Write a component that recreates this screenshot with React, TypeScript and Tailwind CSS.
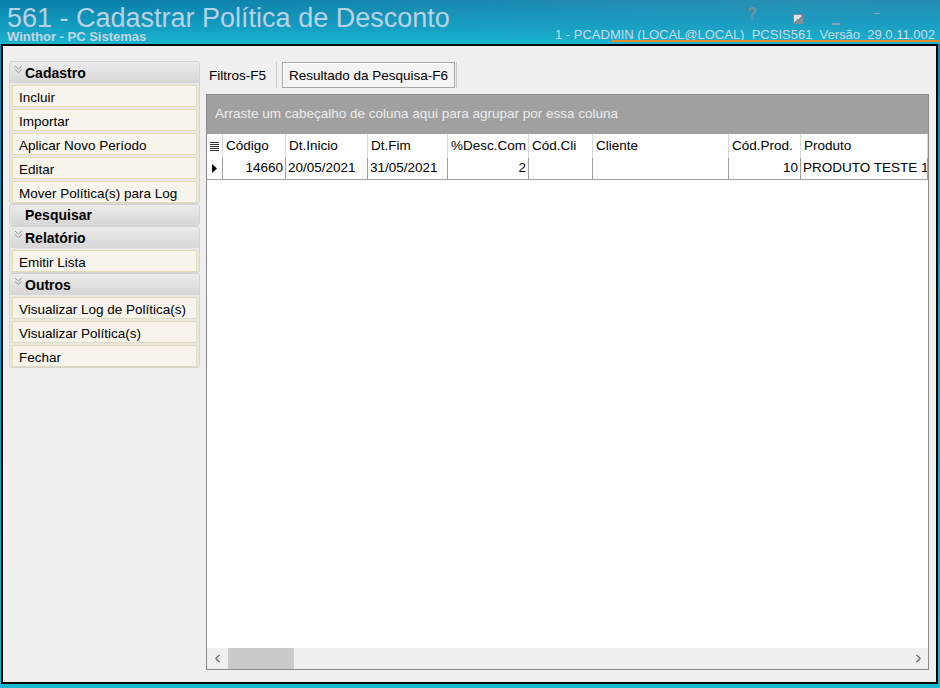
import { ChevronLeft, ChevronRight } from 'lucide-react';

const cadastro = ['Incluir', 'Importar', 'Aplicar Novo Período', 'Editar', 'Mover Política(s) para Log'];
const relatorio = ['Emitir Lista'];
const outros = ['Visualizar Log de Política(s)', 'Visualizar Política(s)', 'Fechar'];

const columns = [
  { label: 'Código', w: 'w-[63px]', value: '14660', right: true },
  { label: 'Dt.Inicio', w: 'w-[82px]', value: '20/05/2021' },
  { label: 'Dt.Fim', w: 'w-[80px]', value: '31/05/2021' },
  { label: '%Desc.Com', w: 'w-[81px]', value: '2', right: true },
  { label: 'Cód.Cli', w: 'w-[64px]', value: '' },
  { label: 'Cliente', w: 'w-[136px]', value: '' },
  { label: 'Cód.Prod.', w: 'w-[72px]', value: '10', right: true },
  { label: 'Produto', w: 'flex-1', value: 'PRODUTO TESTE 10' },
];

function Chevrons() {
  return (
    <svg width="9" height="9" viewBox="0 0 9 9" className="shrink-0">
      <path d="M1 1l3.5 3 3.5-3M1 4.5l3.5 3 3.5-3" fill="none" stroke="#9a9a9a" strokeWidth="1" />
    </svg>
  );
}

function GroupHeader({ title }: { title: string }) {
  return (
    <div className="h-[21px] flex items-center gap-[2px] pl-[4px] rounded-t-[3px] bg-gradient-to-b from-[#ececec] to-[#d6d6d6]">
      <div className="w-[9px] self-start pt-[3px]">
        <Chevrons />
      </div>
      <span className="font-bold text-[14px] text-black leading-none">{title}</span>
    </div>
  );
}

function Group({ title, items }: { title: string; items: string[] }) {
  return (
    <div className="rounded-[3px] border border-[#d4d4d4] bg-[#e8e8e8]">
      <GroupHeader title={title} />
      <div className="flex flex-col gap-[2px] px-[2px] pt-[2px]">
        {items.map((it) => (
          <div
            key={it}
            className="h-[22px] flex items-center pl-[6px] pt-[4px] border border-[#e2dbb6] bg-[#f7f5ec] text-[13.5px] text-black"
          >
            {it}
          </div>
        ))}
      </div>
    </div>
  );
}

export default function App() {
  return (
    <div
      className="w-[940px] h-[688px] flex flex-col overflow-hidden bg-gradient-to-b from-[#0e88b2] to-[#19b6d0]"
      style={{ fontFamily: '"Liberation Sans", Arial, sans-serif' }}
    >
      {/* title bar */}
      <div className="h-[44px] relative shrink-0 bg-gradient-to-b from-[#0a80aa] via-[#1197bd] to-[#1cb4d0]">
        <div className="absolute inset-0 bg-[radial-gradient(ellipse_at_85%_0%,rgba(255,255,255,0.12),transparent_60%)]" />
        <div className="relative pl-[7px] pt-[5px] flex flex-col">
          <span className="text-[27px] leading-[26px] text-[#b8d2e4]">561 - Cadastrar Política de Desconto</span>
          <span className="text-[13px] leading-[12px] font-bold text-[#c4d6e2]">Winthor - PC Sistemas</span>
        </div>
        <span className="absolute left-[747px] top-[2px] text-[16px] font-bold text-[#7d8f99]">?</span>
        <span className="absolute left-[793px] top-[14px] w-[10px] h-[10px] bg-[linear-gradient(135deg,#e2e2e2_50%,#7d8f99_50%)] border border-[#7d8f99]" />
        <span className="absolute left-[832px] top-[23px] w-[8px] h-[2px] bg-[#8ea0aa]" />
        <span className="absolute left-[874px] top-[13px] w-[6px] h-[1px] bg-[#8ea0aa]" />
        <div className="absolute right-[5px] bottom-[2px] flex items-end">
          <span className="text-[13px] leading-[14px] text-[#c6dce8] whitespace-pre">
            1 - PCADMIN (LOCAL@LOCAL)  PCSIS561  Versão  29.0.11.002
          </span>
        </div>
        <div className="absolute left-[612px] right-0 bottom-[2px] h-[2px] bg-[#e58b2c]" />
      </div>

      {/* main form */}
      <div className="flex-1 ml-[1px] mr-[2px] mb-[4px] border-2 border-black bg-[#f0f0f0] flex min-h-0">
        {/* side actions */}
        <div className="w-[191px] ml-[6px] mt-[15px] flex flex-col shrink-0">
          <Group title="Cadastro" items={cadastro} />
          <div className="rounded-[3px] border border-[#d4d4d4] bg-[#e8e8e8]">
            <div className="h-[20px] flex items-center gap-[2px] pl-[4px] rounded-[3px] bg-gradient-to-b from-[#ececec] to-[#d6d6d6]">
              <div className="w-[9px]" />
              <span className="font-bold text-[14px] text-black leading-none">Pesquisar</span>
            </div>
          </div>
          <Group title="Relatório" items={relatorio} />
          <Group title="Outros" items={outros} />
        </div>

        {/* tabs and grid */}
        <div className="flex-1 flex flex-col ml-[6px] mr-[7px] mt-[16px] mb-[12px] min-w-0">
          <div className="h-[26px] flex items-stretch text-[13.5px] text-black">
            <div className="flex items-center pl-[3px] pr-[10px] pt-[2px] border-r border-[#c8c8c8]">Filtros-F5</div>
            <div className="ml-[5px] flex items-center px-[6px] pt-[2px] border border-[#a8a8a8] bg-[#f4f4f4] shadow-[inset_1px_1px_0_#fff]">
              Resultado da Pesquisa-F6
            </div>
            <div className="ml-[1px] border-r border-[#c8c8c8]" />
          </div>

          <div className="mt-[6px] flex-1 flex flex-col border border-[#8a8a8a] bg-white min-h-0">
            <div className="h-[39px] bg-[#a0a0a0] flex items-center pl-[8px] text-[13.5px] text-[#ececec]">
              Arraste um cabeçalho de coluna aqui para agrupar por essa coluna
            </div>
            {/* header row */}
            <div className="h-[24px] flex text-[13.5px] text-black">
              <div className="w-[16px] flex items-center justify-center border-r border-[#d8d8d8]">
                <svg width="9" height="9" viewBox="0 0 9 9">
                  <path d="M0 0.5h9M0 2.5h9M0 4.5h9M0 6.5h9M0 8.5h9" stroke="#333" strokeWidth="1" />
                </svg>
              </div>
              {columns.map((c) => (
                <div key={c.label} className={`${c.w} flex items-center pl-[3px] border-r border-[#d8d8d8] whitespace-nowrap overflow-hidden`}>
                  {c.label}
                </div>
              ))}
            </div>
            {/* data row */}
            <div className="h-[22px] flex text-[13.5px] text-black border-b border-[#a0a0a0]">
              <div className="w-[16px] flex items-center justify-center border-r border-[#a0a0a0]">
                <svg width="5" height="9" viewBox="0 0 5 9">
                  <path d="M0 0l5 4.5L0 9z" fill="#000" />
                </svg>
              </div>
              {columns.map((c) => (
                <div
                  key={c.label}
                  className={`${c.w} flex items-center px-[2px] border-r border-[#a0a0a0] whitespace-nowrap overflow-hidden ${c.right ? 'justify-end' : ''}`}
                >
                  {c.value}
                </div>
              ))}
            </div>
            <div className="flex-1" />
            {/* horizontal scrollbar */}
            <div className="h-[21px] bg-[#f0f0f0] flex items-center">
              <div className="w-[20px] flex justify-center text-[#6d6d6d]">
                <ChevronLeft size={13} strokeWidth={2.5} />
              </div>
              <div className="w-[66px] h-full bg-[#cacaca] ml-[1px]" />
              <div className="flex-1" />
              <div className="w-[20px] flex justify-center text-[#6d6d6d]">
                <ChevronRight size={13} strokeWidth={2.5} />
              </div>
            </div>
          </div>
        </div>
      </div>
    </div>
  );
}
